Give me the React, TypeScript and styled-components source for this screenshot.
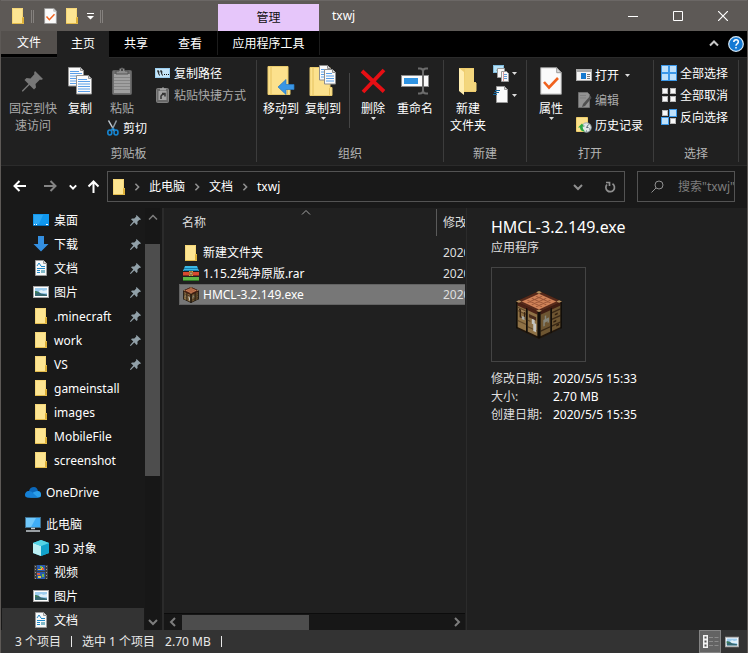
import React from "react";
import styled, { createGlobalStyle } from "styled-components";

const GlobalStyle = createGlobalStyle`
  *, *::before, *::after { box-sizing: border-box; }
  html, body, #root { height: 100%; }
  body {
    margin: 0;
    background: #202020;
    color: #fff;
    font: 12px/17px "Noto Sans", "Noto Sans CJK SC", sans-serif;
    overflow: hidden;
  }
  button, input { font: inherit; color: inherit; background: none; border: 0; margin: 0; padding: 0; }
  svg { display: block; flex: none; }
  h1, h2, dl, dd, ul, p { margin: 0; padding: 0; font-weight: 400; }
  ul { list-style: none; }
`;

/* ---------- icons ---------- */

const FolderIcon = ({ size = 16 }: { size?: number }) => (
  <svg width={size} height={size} viewBox="0 0 16 16">
    <path d="M2 0h11v9h1v7H2z" fill="#ffe38f" />
    <path d="M2.5.5h10v15h-10z" fill="#fde592" stroke="#f5d678" />
    <path d="M12.5 15.5v-6h1v6z" fill="#ffe9a0" stroke="#dcae35" />
    <path d="M2 15.5h12" stroke="#e3bb4c" />
  </svg>
);

const PinSmall = () => (
  <svg width="11" height="11" viewBox="0 0 11 11" fill="#91a0a8">
    <path d="M6.500 0L11 4.300l-1 .6-.6-.2-2 2 .2 2.300-1 .9L4.300 7.600 1 10.800 0 11l.2-1L3.300 6.600 1 4.300l1-.9 2.300.2 2-2-.2-.8z" />
  </svg>
);

const PinLarge = () => (
  <svg width="22" height="22" viewBox="0 0 22 22" fill="#777">
    <path d="M13 1L21 9l-2 1-1-.5-4.500 4.500.5 3.500-2 2L7.500 15 1 21.500H0V20.500L6.500 14 2.500 10l2-2 4 .5L12.500 4 12 3z" />
  </svg>
);

const CopyIcon = () => (
  <svg width="25" height="28" viewBox="0 0 25 28">
    {[[0, 0], [8, 8]].map(([x, y]) => (
      <g key={x} transform={`translate(${x} ${y})`}>
        <path d="M.5.5h12l3 3v15.500H.5z" fill="#fbfbfb" stroke="#959595" />
        <path d="M12.500.5v3h3z" fill="#ddd" stroke="#959595" />
        <path d="M2 4.500h9M2 6.500h12M2 9h12M2 11.500h12M2 14h12M2 16.500h12" stroke="#5b9fe8" strokeWidth="1" />
      </g>
    ))}
  </svg>
);

const PasteIcon = () => (
  <svg width="20" height="28" viewBox="0 0 20 28">
    <rect x=".5" y="3.500" width="19" height="24" rx="1" fill="#6e6e6e" stroke="#606060" />
    <rect x="2" y="7" width="16" height="19" fill="#a0a0a0" />
    <path d="M2 10.500h16M2 13.500h16M2 16.500h16M2 19.500h16M2 22.500h16" stroke="#858585" />
    <path d="M4 7V4h3q0-3 3-3t3 3h3v3z" fill="#8d8d8d" stroke="#555" />
    <circle cx="10" cy="3" r="1" fill="#333" />
  </svg>
);

const ScissorsIcon = () => (
  <svg width="14" height="16" viewBox="0 0 14 16" fill="none">
    <path d="M2.500 0.500L8.500 11" stroke="#c5ced6" strokeWidth="1.500" />
    <path d="M10.500 0.500L5.500 11" stroke="#8e9aa3" strokeWidth="1.500" />
    <ellipse cx="3.800" cy="12.500" rx="2" ry="2.500" stroke="#1685d1" strokeWidth="1.600" />
    <ellipse cx="10" cy="12.500" rx="2" ry="2.500" stroke="#1685d1" strokeWidth="1.600" />
    <path d="M5 10l2-1.500L9 10" stroke="#1685d1" strokeWidth="1.500" />
  </svg>
);

const PathIcon = () => (
  <svg width="16" height="16" viewBox="0 0 16 16">
    <rect x=".5" y="3.500" width="14" height="9" fill="#c5e5f8" stroke="#9ccff0" />
    <path d="M2.500 5.500l2 5M5.500 5.500l2 5M3.500 5.500l.5 2M6.500 5.500l.5 2" stroke="#111" />
    <path d="M9 9.500h1M11 9.500h1M13 9.500h1" stroke="#111" />
  </svg>
);

const ShortcutIcon = () => (
  <svg width="16" height="16" viewBox="0 0 16 16">
    <rect x="1.500" y="1.500" width="12" height="14" rx="1" fill="#696969" stroke="#808080" />
    <rect x="3.500" y="4" width="8" height="9" fill="#a3a3a3" />
    <path d="M5 3.500v-2h2v-1h2v1h2v2z" fill="#a0a0a0" />
    <path d="M6 12V9q0-1 3-2M7 6.500h3v3" stroke="#333" strokeWidth="1.500" fill="none" />
  </svg>
);

const MoveIcon = () => (
  <svg width="28" height="30" viewBox="0 0 28 30">
    <path d="M1 .5h20v20h2v8H1z" fill="#fce18d" stroke="#eacb6c" />
    <path d="M4 1v27M20.500 21v7" stroke="#e6c25f" />
    <path d="M11 21l8-7.500v5h8v5h-8v5z" fill="#3a96e5" stroke="#2678c1" strokeWidth=".7" />
  </svg>
);

const CopyToIcon = () => (
  <svg width="28" height="32" viewBox="0 0 28 32">
    <path d="M1 2.500h20v20h2v8H1z" fill="#fce18d" stroke="#eacb6c" />
    <path d="M4 3v27M20.500 23v7" stroke="#e6c25f" />
    {[[10, 0], [15, 4]].map(([x, y]) => (
      <g key={x} transform={`translate(${x} ${y})`}>
        <path d="M.5.500h8l3 3v11.500H.5z" fill="#fbfbfb" stroke="#8d8d8d" />
        <path d="M8.500.500v3h3" fill="#ddd" stroke="#8d8d8d" />
        <path d="M2 4.500h6M2 7h8M2 9.500h8M2 12h8" stroke="#5b9fe8" />
      </g>
    ))}
  </svg>
);

const DeleteIcon = () => (
  <svg width="26" height="26" viewBox="0 0 26 26">
    <path d="M2 3l22 20.500M24 2L3 24" stroke="#e60f14" strokeWidth="3.800" />
  </svg>
);

const RenameIcon = () => (
  <svg width="28" height="28" viewBox="0 0 28 28" fill="none">
    <rect x=".5" y="8.500" width="27" height="11" fill="#fafafa" stroke="#8b8b8b" />
    <rect x="3" y="11" width="14" height="6" fill="#2f93e2" />
    <path d="M17 1.500h2q3 0 3 3v19q0 3-3 3h-2M27 1.500h-2q-3 0-3 3M27 26.500h-2q-3 0-3-3" stroke="#6c6c6c" strokeWidth="2" />
  </svg>
);

const NewFolderIcon = () => (
  <svg width="20" height="28" viewBox="0 0 20 28">
    <path d="M1 1h15v14h2v10H5z" fill="#efcd6e" />
    <path d="M7 2h9v14h2.500v8H6z" fill="#f3d67d" />
    <path d="M1 1l5 4v23l-5-4z" fill="#ffedb0" />
  </svg>
);

const NewItemIcon = () => (
  <svg width="16" height="18" viewBox="0 0 16 18">
    <rect x=".5" y="1.500" width="10" height="7" fill="#b7e2f8" stroke="#80bbdc" />
    <path d="M3 6.500l2-2 2 2z" fill="#398c77" />
    <path d="M4.500 4.500h7v9h-7z" fill="#f8f8f8" stroke="#999" />
    <path d="M8.500 7.500h5l2 2v8h-7z" fill="#f8f8f8" stroke="#999" />
    <path d="M10 10.500h4M10 12.500h4M10 14.500h4" stroke="#619bd6" />
    <path d="M10.500 8v9" stroke="#db9f9f" />
  </svg>
);

const EasyAccessIcon = () => (
  <svg width="16" height="18" viewBox="0 0 16 18">
    <path d="M3.500.500h8l3 3v13h-11z" fill="#fbfbfb" stroke="#999" />
    <path d="M11.500.500v3h3z" fill="#ddd" stroke="#999" />
    <path d="M2 4.500h5M1 6.500h5M0 8.500h4" stroke="#16669d" strokeWidth="1.200" />
  </svg>
);

const PropertiesIcon = ({ small = false }: { small?: boolean }) => (
  <svg width={small ? 13 : 22} height={small ? 16 : 28} viewBox="0 0 22 28">
    <path d="M.7.700h16l4.600 5v21.500H.7z" fill="#fbfbfb" stroke="#9b9b9b" strokeWidth={small ? 1.5 : 1} />
    <path d="M16.700.700v5h4.600z" fill="#ddd" stroke="#9b9b9b" />
    <path d="M4 15l5 5.500L18 11" stroke="#f0621e" strokeWidth="2.600" fill="none" />
  </svg>
);

const OpenIcon = () => (
  <svg width="16" height="16" viewBox="0 0 16 16">
    <rect x=".5" y="2.500" width="15" height="11" fill="#f5f5f5" stroke="#aaa" />
    <path d="M1 4h14" stroke="#a7a7a7" strokeWidth="2" />
    <rect x="5" y="6" width="5" height="6" fill="#1479cf" />
    <path d="M11 7.500h3M11 9.500h3M11 11.500h3" stroke="#777" />
  </svg>
);

const EditIcon = () => (
  <svg width="16" height="16" viewBox="0 0 16 16">
    <path d="M2.500.500h9l2 2v13h-11z" fill="#929292" stroke="#6e6e6e" />
    <path d="M4 3.500h6M4 6h6" stroke="#818181" />
    <path d="M14.500 3.500L7 12l-1 3 3-1 6.500-8z" fill="#505050" />
  </svg>
);

const HistoryIcon = () => (
  <svg width="16" height="16" viewBox="0 0 16 16">
    <path d="M.5.500h11v14H.5z" fill="#fbe18b" stroke="#efcd6c" />
    <circle cx="10.500" cy="10.500" r="4.700" fill="#e1e7e8" stroke="#9aabb0" />
    <path d="M10.500 10.500l2-3M10.500 10.500h2M7.500 9h1M10 14h1M13 12h1" stroke="#586b73" />
    <path d="M2 10.500l4-4 2 3H6.500q0 3 2.500 5-5 0-5-4z" fill="#2ba843" />
  </svg>
);

const SELECT_ON: Record<string, number[]> = { all: [1, 1, 1, 1], none: [0, 0, 0, 0], invert: [0, 1, 1, 0] };

const SelectIcon = ({ kind }: { kind: "all" | "none" | "invert" }) => (
  <svg width="16" height="16" viewBox="0 0 16 16">
    {SELECT_ON[kind].map((on, i) => {
      const x = (i % 2) * 8;
      const y = i > 1 ? 8 : 0;
      return on ? (
        <g key={i}>
          <rect x={x} y={y} width="8" height="8" fill="#3c98e8" />
          <rect x={x + 1} y={y + 1} width="6" height="6" fill="#bfe1fb" />
        </g>
      ) : (
        <rect key={i} x={x + 1.5} y={y + 1.5} width="5" height="5" fill="#f8f8f8" stroke="#b9b9b9" />
      );
    })}
  </svg>
);

const DesktopIcon = () => (
  <svg width="16" height="16" viewBox="0 0 16 16">
    <path d="M0 2h16v12H0z" fill="#1097ee" />
    <path d="M1 3h9L6 12H1z" fill="#2ba7f5" />
    <path d="M1 12.500h1M3 12.500h1M13 12.500h2" stroke="#fff" />
    <path d="M0 13.500h16" stroke="#0872bf" />
  </svg>
);

const DownloadIcon = () => (
  <svg width="16" height="16" viewBox="0 0 16 16">
    <path d="M5 0h6v8h4.500L8 15.500.500 8H5z" fill="#348fe0" />
  </svg>
);

const DocumentIcon = () => (
  <svg width="16" height="16" viewBox="0 0 16 16">
    <path d="M2.500.500h8l3 3v12h-11z" fill="#f7f9fa" stroke="#9a9a9a" />
    <path d="M10.500.500v3h3" fill="#ddd" stroke="#9a9a9a" />
    <path d="M4 6l2-3 2 3M4 8.500h8M4 10.500h3M8 6.500h4M4 12.500h3" stroke="#2289c8" fill="none" />
    <rect x="8" y="10" width="4" height="3" fill="#82b9c8" />
  </svg>
);

const PictureIcon = ({ width = 16 }: { width?: number }) => (
  <svg width={width} height={width} viewBox="0 0 16 16">
    <rect x=".5" y="2.500" width="15" height="11" fill="#fff" stroke="#a5a5a5" />
    <rect x="2" y="4" width="12" height="8" fill="#9fceef" />
    <path d="M6 7q3-2 4 0l4-1v3H6z" fill="#dff0f9" />
    <path d="M2 7q4 0 6 2.500l6 1V12H2z" fill="#356872" />
    <path d="M2 7q2 0 4 2H2z" fill="#3e8056" />
  </svg>
);

const CloudIcon = () => (
  <svg width="16" height="16" viewBox="0 0 16 16">
    <path d="M1 10q0-3 3-3 1-4 5-4 3 0 4 4 3 0 3 4 0 2.500-3 2.500H3q-3 0-3-3z" fill="#0b67b9" />
    <path d="M6 13q-1-3 3-5l3-1q4 0 4 4 0 2.500-3 2.500H3z" fill="#2b9fea" />
    <path d="M0 10q1-3 4-3 3 0 5 3l4 3.500H3q-3 0-3-3.500z" fill="#1681d6" />
  </svg>
);

const ComputerIcon = () => (
  <svg width="16" height="16" viewBox="0 0 16 16">
    <rect x=".5" y="1.500" width="15" height="10" fill="#3fadf7" stroke="#3f7190" />
    <path d="M1 2h10L6 11H1z" fill="#71c8fb" />
    <path d="M6 12.500h4M1 15h14" stroke="#c3ccd1" strokeWidth="1.500" />
  </svg>
);

const CubeIcon = () => (
  <svg width="16" height="16" viewBox="0 0 16 16">
    <path d="M8 0l8 3v10l-8 3-8-3V3z" fill="#24bddb" />
    <path d="M0 3l8 3v10l-8-3z" fill="#bceff3" />
    <path d="M8 6l8-3v10l-8 3z" fill="#11a2cb" />
    <path d="M0 3l8-3 8 3-8 3z" fill="#55d4e5" />
  </svg>
);

const VideoIcon = () => (
  <svg width="16" height="16" viewBox="0 0 16 16">
    <path d="M1 1h14v14H1z" fill="#3d3d3d" />
    <path d="M2.500 2v13M13.500 2v13" stroke="#999" strokeDasharray="1 2" />
    <path d="M4 1h8v6H4zM4 8h8v7H4z" fill="#285baf" />
    <path d="M5 5h3V3h2v3H5zM5 12h3v2H5z" fill="#e4c23b" />
    <path d="M9 4h2v2H9zM4 9h3v2H4z" fill="#d95a46" />
    <path d="M7 2h2v2H7zM9 10h2v3H9z" fill="#6fb54c" />
  </svg>
);

const ArchiveIcon = () => (
  <svg width="16" height="16" viewBox="0 0 16 16">
    <path d="M2 0h12l2 5H0z" fill="#3bb8e5" />
    <path d="M1 2.500h14M1 4.500h14" stroke="#167fae" />
    <path d="M0 6h16v4H0z" fill="#d84a31" />
    <path d="M0 9.500h16" stroke="#8b2b20" />
    <path d="M0 11h16v4H0z" fill="#5eb544" />
    <path d="M0 14.500h16" stroke="#2e7625" />
    <path d="M6 5h4v5H6z" fill="#d9a445" />
    <path d="M7 6h2v3H7z" fill="#f8ecc9" stroke="#714b20" />
  </svg>
);

/* Isometric block: each face is drawn on its own 16×16 grid. */
const CraftingTable = ({ size }: { size: number }) => (
  <svg width={size} height={size} viewBox="0 0 48 48">
    <path d="M24 0L47 10.500V37L24 48 1 37V10.500z" fill="#21160c" />
    <g transform="matrix(1.4375 .65625 0 1.65625 1 10.500)">
      <path d="M1 1h6v14H1zM8 1h7v14H8z" fill="#8f7246" />
      <path d="M1 3h6v2H1zM1 11h6M8 12h7M8 8h2" fill="#a5855a" stroke="#604829" strokeWidth=".7" />
      <path d="M1 0h14v2H1z" fill="#4b2216" />
      <path d="M2 4h1v4h3V4" fill="none" stroke="#3c2614" />
      <path d="M4 7h2v2H4z" fill="#aaaaa4" />
      <path d="M9 4h5v2H9z" fill="#4a2c1c" />
      <path d="M11 6h2v2h1v5h-2V9h-1z" fill="#c6c6c2" />
      <path d="M.5 0v16M7.500 1v15M15.500 0v16" stroke="#110e0a" />
    </g>
    <g transform="matrix(1.4375 -.65625 0 1.65625 24 21)">
      <path d="M1 1h7v14H1zM9 1h6v14H9z" fill="#6d5531" />
      <path d="M1 12h7M9 4h6M9 8h6M9 12h6" stroke="#3a2916" strokeWidth=".9" />
      <path d="M1 0h14v2H1z" fill="#3f1d12" />
      <path d="M4 4h1v2h2v3H6V8H4v2H3V6h1z" fill="#85857a" />
      <path d="M11 6h2M10 10h2M12 13h2" stroke="#2f1e0f" />
      <path d="M.5 0v16M8.500 1v15M15.500 0v16" stroke="#110e0a" />
    </g>
    <g transform="matrix(1.4375 -.65625 1.4375 .65625 1 10.500)">
      <path d="M0 0h16v16H0z" fill="#572a1b" />
      <path d="M2 2h12v12H2z" fill="#cf8258" />
      <path d="M5 3v10M8 3v10M11 3v10M3 5h10M3 8h10M3 11h10" stroke="#9a5638" strokeWidth=".8" />
      <path d="M0 0h2v2H0zM14 0h2v2h-2zM0 14h2v2H0zM14 14h2v2h-2z" fill="#b0905f" />
    </g>
  </svg>
);

const ARROWS = {
  left: "M13 6H1.500M6.500 1L1.500 6l5 5",
  right: "M0 6h11.500M6.500 1l5 5-5 5",
  up: "M6.500 13V1.500M1.500 6.500l5-5 5 5",
};

const ArrowIcon = ({ dir }: { dir: keyof typeof ARROWS }) => (
  <svg width="13" height="13" viewBox="0 0 13 13" fill="none" stroke="currentColor" strokeWidth="2">
    <path d={ARROWS[dir]} />
  </svg>
);

const CHEVRONS = {
  up: "M1 6.500L5 2.500l4 4",
  down: "M1 3l4 4 4-4",
  left: "M7 1L3 5l4 4",
  right: "M3 1l4 4-4 4",
};

const Chevron = ({ dir, size = 10, weight = 1.5 }: { dir: keyof typeof CHEVRONS; size?: number; weight?: number }) => (
  <svg width={size} height={size} viewBox="0 0 10 10" fill="none" stroke="currentColor" strokeWidth={weight}>
    <path d={CHEVRONS[dir]} />
  </svg>
);

const Drop = () => (
  <svg width="5" height="3" viewBox="0 0 5 3" fill="#dcdcdc">
    <path d="M0 0h5L2.500 3z" />
  </svg>
);

/* ---------- frame ---------- */

const Window = styled.div`
  display: flex;
  flex-direction: column;
  height: 100vh;
  border: solid #5d5956;
  border-width: 0 1px;
  background: #191919;
`;

const TitleBar = styled.header`
  display: flex;
  flex: none;
  height: 31px;
  padding-right: 2px;
  background: #5d5956;
  border-top: 1px solid #6b6765;
`;

const QuickAccess = styled.div`
  display: flex;
  align-items: center;
  width: 217px;
  padding-left: 6px;
`;

const QuickButton = styled.button<{ $narrow?: boolean }>`
  display: flex;
  align-items: center;
  justify-content: center;
  width: ${(p) => (p.$narrow ? 15 : 22)}px;
  height: 20px;
`;

const QuickDivider = styled.span`
  width: 3px;
  height: 13px;
  margin: 0 5px 0 2px;
  border: solid #85817e;
  border-width: 0 1px;
`;

const ContextTitle = styled.div`
  align-self: flex-end;
  width: 101px;
  height: 27px;
  background: #e6c6fa;
  color: #111;
  line-height: 27px;
  text-align: center;
`;

const WindowTitle = styled.h1`
  flex: 1;
  padding-left: 13px;
  font-size: 12px;
  line-height: 30px;
`;

const WindowButton = styled.button`
  display: flex;
  align-items: center;
  justify-content: center;
  width: 45px;
`;

const TabBar = styled.nav`
  display: flex;
  flex: none;
  align-items: flex-start;
  height: 27px;
  padding-right: 3px;
  background: #000;
  border-bottom: 1px solid #2b2b2b;
`;

const Tab = styled.button<{ $kind?: "file" | "active" | "context" }>`
  flex: none;
  width: ${(p) => (p.$kind === "file" ? 56 : p.$kind === "active" ? 52 : p.$kind === "context" ? 103 : 54)}px;
  height: ${(p) => (p.$kind === "file" ? 23 : p.$kind === "active" ? 27 : 24)}px;
  padding-bottom: ${(p) => (p.$kind === "active" ? 3 : 0)}px;
  background: ${(p) => (p.$kind === "file" ? "#54504d" : p.$kind === "active" ? "#202020" : "transparent")};
  border: solid ${(p) => (p.$kind === "context" ? "#1c1c1c" : "transparent")};
  border-width: 0 1px;
`;

const TabTools = styled.div`
  display: flex;
  flex: 1;
  align-items: center;
  justify-content: flex-end;
  gap: 9px;
  height: 26px;
  color: #c8c8c8;
`;

const ToolButton = styled.button`
  display: flex;
`;

/* ---------- ribbon ---------- */

const Ribbon = styled.section`
  display: flex;
  flex: none;
  height: 108px;
  padding: 2px 0 3px;
  background: #202020;
  border-bottom: 1px solid #2b2b2b;
`;

const Group = styled.div<{ $width: number }>`
  display: flex;
  flex: none;
  flex-direction: column;
  width: ${(p) => p.$width}px;
  border-right: 1px solid #3c3c3c;
`;

const GroupBody = styled.div<{ $pad?: number }>`
  display: flex;
  flex: 1;
  align-items: flex-start;
  padding: 2px 0 0 ${(p) => p.$pad ?? 0}px;
`;

const GroupName = styled.div`
  height: 17px;
  color: #b4b4b4;
  text-align: center;
`;

const BigButton = styled.button<{ $width: number; $muted?: boolean }>`
  display: flex;
  flex: none;
  flex-direction: column;
  align-items: center;
  width: ${(p) => p.$width}px;
  padding-top: 2px;
  color: ${(p) => (p.$muted ? "#aaa" : "#fff")};
  white-space: nowrap;
`;

const BigIcon = styled.span`
  display: flex;
  align-items: center;
  justify-content: center;
  height: 36px;
  padding-bottom: 2px;
`;

const Stack = styled.div<{ $gap?: number; $left?: number; $top?: number }>`
  display: flex;
  flex: none;
  flex-direction: column;
  align-items: flex-start;
  gap: ${(p) => p.$gap ?? 0}px;
  margin-left: ${(p) => p.$left ?? 0}px;
  padding-top: ${(p) => p.$top ?? 0}px;
`;

const SmallButton = styled.button<{ $muted?: boolean; $indent?: number }>`
  display: flex;
  align-items: center;
  gap: 3px;
  height: 22px;
  padding-left: ${(p) => p.$indent ?? 0}px;
  color: ${(p) => (p.$muted ? "#aaa" : "#fff")};
  white-space: nowrap;
`;

const InnerDivider = styled.span`
  width: 1px;
  height: 55px;
  margin: 11px 2px 0 5px;
  background: #454545;
`;

/* ---------- address row ---------- */

const AddressRow = styled.div`
  display: flex;
  flex: none;
  align-items: center;
  height: 42px;
  padding: 0 12px 1px 0;
`;

const NavButtons = styled.div`
  display: flex;
  align-items: center;
  width: 106px;
  padding-left: 12px;
`;

const NavButton = styled.button<{ $width: number; $muted?: boolean }>`
  display: flex;
  width: ${(p) => p.$width}px;
  color: ${(p) => (p.$muted ? "#858585" : "#fff")};
`;

const AddressBox = styled.div`
  display: flex;
  flex: 1;
  align-items: center;
  height: 31px;
  padding-left: 3px;
  border: 1px solid #535353;
  color: #8f8f8f;
`;

const Crumb = styled.a`
  margin: 0 8px;
  color: #fff;
  text-decoration: none;
`;

const AddressTail = styled.div`
  display: flex;
  align-items: center;
  gap: 21px;
  margin-left: auto;
  padding-right: 8px;
`;

const SearchBox = styled.label`
  display: flex;
  align-items: center;
  gap: 14px;
  width: 98px;
  height: 31px;
  margin-left: 12px;
  padding-left: 13px;
  border: 1px solid #535353;
  color: #8f8f8f;
`;

const SearchInput = styled.input`
  flex: 1;
  min-width: 0;
  outline: 0;
  &::placeholder { color: #7d7d7d; opacity: 1; }
`;

/* ---------- panes ---------- */

const Panes = styled.main`
  display: flex;
  flex: 1;
  min-height: 0;
`;

const Tree = styled.ul`
  flex: none;
  width: 144px;
  padding: 0 1px;
  overflow: hidden;
`;

const TreeRow = styled.li<{ $depth: number; $selected?: boolean; $gap?: boolean }>`
  display: flex;
  align-items: center;
  gap: 5px;
  height: 24px;
  margin-top: ${(p) => (p.$gap ? 8 : 0)}px;
  padding: 0 3px 0 ${(p) => (p.$depth ? 31 : 23)}px;
  background: ${(p) => (p.$selected ? "#333" : "transparent")};
`;

const TreeName = styled.span`
  flex: 1;
  white-space: nowrap;
`;

const VerticalBar = styled.div`
  display: flex;
  flex: none;
  flex-direction: column;
  align-items: center;
  width: 15px;
  padding: 5px 0 3px;
  background: #171717;
  color: #7d7d7d;
`;

const VerticalThumb = styled.div`
  width: 100%;
  height: 232px;
  margin: 21px 0 auto;
  background: #4d4d4d;
`;

const FilesPane = styled.section`
  display: flex;
  flex: 1 1 305px;
  flex-direction: column;
  min-width: 0;
  margin-left: 2px;
  padding-right: 1px;
  background: #202020;
  border: solid #2b2b2b;
  border-width: 0 1px 0 2px;
`;

const FilesScroll = styled.div`
  position: relative;
  flex: 1;
  min-height: 0;
  padding: 1px 0 0 15px;
  overflow: hidden;
`;

const SortMark = styled.span`
  position: absolute;
  top: 0;
  left: 137px;
  color: #a5a5a5;
`;

const FileTable = styled.table`
  width: 100%;
  min-width: 377px;
  table-layout: fixed;
  border-collapse: separate;
  border-spacing: 0;
  text-align: left;
`;

const HeadCell = styled.th<{ $date?: boolean }>`
  width: ${(p) => (p.$date ? "auto" : "257px")};
  height: 27px;
  padding: 0 0 0 ${(p) => (p.$date ? 6 : 3)}px;
  border-left: ${(p) => (p.$date ? "1px solid #5a5a5a" : "0")};
  color: #dedede;
  font-weight: 400;
  white-space: nowrap;
`;

const GapCell = styled.td`
  height: 6px;
  padding: 0;
`;

const FileRow = styled.tr<{ $selected?: boolean }>`
  background: ${(p) => (p.$selected ? "#777" : "transparent")};
  box-shadow: ${(p) => (p.$selected ? "inset 0 0 0 1px #636363" : "none")};
`;

const FileCell = styled.td<{ $date?: boolean }>`
  height: 21px;
  padding: 0 0 0 ${(p) => (p.$date ? 7 : 4)}px;
  color: ${(p) => (p.$date ? "#dedede" : "#fff")};
  white-space: nowrap;
`;

const FileName = styled.div`
  display: flex;
  align-items: center;
  gap: 4px;
`;

const HorizontalBar = styled.div`
  display: flex;
  flex: none;
  align-items: center;
  height: 17px;
  padding: 0 3px 0 4px;
  background: #171717;
  border-top: 1px solid #0c0c0c;
  color: #7d7d7d;
`;

const HorizontalThumb = styled.div`
  width: 127px;
  height: 15px;
  margin: 0 auto 0 4px;
  background: #4d4d4d;
`;

const DetailsPane = styled.aside`
  flex: 1 1 280px;
  min-width: 0;
  padding: 7px 0 0 24px;
  background: #202020;
  white-space: nowrap;
`;

const DetailsTitle = styled.h2`
  font-size: 16px;
  line-height: 24px;
`;

const DetailsKind = styled.p`
  line-height: 18px;
  color: #dedede;
`;

const Preview = styled.div`
  display: flex;
  align-items: center;
  justify-content: center;
  width: 95px;
  height: 95px;
  margin: 10px 0 8px;
  border: 1px solid #444;
`;

const Facts = styled.dl`
  display: grid;
  grid-template-columns: 62px auto;
  line-height: 18px;
`;

const FactName = styled.dt`
  color: #dedede;
`;

const StatusBar = styled.footer`
  display: flex;
  flex: none;
  align-items: center;
  height: 23px;
  padding: 0 4px 0 14px;
  background: #333;
  color: #e8e8e8;
`;

const StatusDivider = styled.span`
  width: 1px;
  height: 11px;
  margin: 0 10px;
  background: #e8e8e8;
`;

const StatusSize = styled.span`
  margin-left: 10px;
`;

const ViewButtons = styled.div`
  display: flex;
  margin-left: auto;
`;

const ViewButton = styled.button<{ $on?: boolean }>`
  display: flex;
  align-items: center;
  justify-content: center;
  width: 22px;
  height: 23px;
  background: ${(p) => (p.$on ? "#636363" : "transparent")};
  border: 1px solid ${(p) => (p.$on ? "#858585" : "transparent")};
`;

/* ---------- data ---------- */

type TreeItem = { name: string; icon: React.ReactNode; depth: number; pinned?: boolean; gap?: boolean; selected?: boolean };

const tree: TreeItem[] = [
  { name: "桌面", icon: <DesktopIcon />, depth: 1, pinned: true },
  { name: "下载", icon: <DownloadIcon />, depth: 1, pinned: true },
  { name: "文档", icon: <DocumentIcon />, depth: 1, pinned: true },
  { name: "图片", icon: <PictureIcon />, depth: 1, pinned: true },
  { name: ".minecraft", icon: <FolderIcon />, depth: 1, pinned: true },
  { name: "work", icon: <FolderIcon />, depth: 1, pinned: true },
  { name: "VS", icon: <FolderIcon />, depth: 1, pinned: true },
  { name: "gameinstall", icon: <FolderIcon />, depth: 1 },
  { name: "images", icon: <FolderIcon />, depth: 1 },
  { name: "MobileFile", icon: <FolderIcon />, depth: 1 },
  { name: "screenshot", icon: <FolderIcon />, depth: 1 },
  { name: "OneDrive", icon: <CloudIcon />, depth: 0, gap: true },
  { name: "此电脑", icon: <ComputerIcon />, depth: 0, gap: true },
  { name: "3D 对象", icon: <CubeIcon />, depth: 1 },
  { name: "视频", icon: <VideoIcon />, depth: 1 },
  { name: "图片", icon: <PictureIcon />, depth: 1 },
  { name: "文档", icon: <DocumentIcon />, depth: 1, selected: true },
];

const files = [
  { name: "新建文件夹", icon: <FolderIcon /> },
  { name: "1.15.2纯净原版.rar", icon: <ArchiveIcon /> },
  { name: "HMCL-3.2.149.exe", icon: <CraftingTable size={16} />, selected: true },
];

const facts = [
  ["修改日期:", "2020/5/5 15:33"],
  ["大小:", "2.70 MB"],
  ["创建日期:", "2020/5/5 15:35"],
];

type BigProps = { icon: React.ReactNode; width: number; lines: string[]; muted?: boolean; drop?: boolean };

const Big = ({ icon, width, lines, muted, drop }: BigProps) => (
  <BigButton $width={width} $muted={muted}>
    <BigIcon>{icon}</BigIcon>
    {lines.map((line) => (
      <span key={line}>{line}</span>
    ))}
    {drop && <Drop />}
  </BigButton>
);

export default function App() {
  return (
    <Window>
      <GlobalStyle />
      <TitleBar>
        <QuickAccess>
          <QuickButton aria-label="txwj"><FolderIcon /></QuickButton>
          <QuickDivider />
          <QuickButton aria-label="属性"><PropertiesIcon small /></QuickButton>
          <QuickButton aria-label="新建文件夹"><FolderIcon /></QuickButton>
          <QuickButton $narrow aria-label="自定义">
            <svg width="7" height="7" viewBox="0 0 7 7" fill="#fff"><path d="M0 0h7v1H0zM0 3h7L3.500 6.500z" /></svg>
          </QuickButton>
          <QuickDivider />
        </QuickAccess>
        <ContextTitle>管理</ContextTitle>
        <WindowTitle>txwj</WindowTitle>
        <WindowButton aria-label="最小化">
          <svg width="10" height="10" viewBox="0 0 10 10" stroke="#fff"><path d="M0 5.500h10" /></svg>
        </WindowButton>
        <WindowButton aria-label="最大化">
          <svg width="10" height="10" viewBox="0 0 10 10" fill="none" stroke="#fff"><path d="M.5.500h9v9h-9z" /></svg>
        </WindowButton>
        <WindowButton aria-label="关闭">
          <svg width="10" height="10" viewBox="0 0 10 10" stroke="#fff" strokeWidth="1.200"><path d="M0 0l10 10M10 0L0 10" /></svg>
        </WindowButton>
      </TitleBar>

      <TabBar>
        <Tab $kind="file">文件</Tab>
        <Tab $kind="active">主页</Tab>
        <Tab>共享</Tab>
        <Tab>查看</Tab>
        <Tab $kind="context">应用程序工具</Tab>
        <TabTools>
          <ToolButton aria-label="折叠功能区"><Chevron dir="up" weight={2} /></ToolButton>
          <ToolButton aria-label="帮助">
            <svg width="16" height="16" viewBox="0 0 16 16">
              <circle cx="8" cy="8" r="7.300" fill="#1379d4" stroke="#d5e7f5" strokeWidth="1.200" />
              <path d="M5.800 6q0-2.300 2.300-2.300T10.300 6q0 1-1.200 1.800T8 9.700M8 11v1.600" fill="none" stroke="#fff" strokeWidth="1.500" />
            </svg>
          </ToolButton>
        </TabTools>
      </TabBar>

      <Ribbon>
        <Group $width={256}>
          <GroupBody>
            <Big icon={<PinLarge />} width={64} lines={["固定到快", "速访问"]} muted />
            <Big icon={<CopyIcon />} width={30} lines={["复制"]} />
            <Stack $left={1}>
              <Big icon={<PasteIcon />} width={52} lines={["粘贴"]} muted />
              <SmallButton $indent={10}><ScissorsIcon />剪切</SmallButton>
            </Stack>
            <Stack $left={7}>
              <SmallButton><PathIcon />复制路径</SmallButton>
              <SmallButton $muted><ShortcutIcon />粘贴快捷方式</SmallButton>
            </Stack>
          </GroupBody>
          <GroupName>剪贴板</GroupName>
        </Group>
        <Group $width={187}>
          <GroupBody $pad={3}>
            <Big icon={<MoveIcon />} width={42} lines={["移动到"]} drop />
            <Big icon={<CopyToIcon />} width={42} lines={["复制到"]} drop />
            <InnerDivider />
            <Big icon={<DeleteIcon />} width={42} lines={["删除"]} drop />
            <Big icon={<RenameIcon />} width={42} lines={["重命名"]} />
          </GroupBody>
          <GroupName>组织</GroupName>
        </Group>
        <Group $width={83}>
          <GroupBody $pad={3}>
            <Big icon={<NewFolderIcon />} width={42} lines={["新建", "文件夹"]} />
            <Stack $left={4}>
              <SmallButton aria-label="新建项目"><NewItemIcon /><Drop /></SmallButton>
              <SmallButton aria-label="轻松访问"><EasyAccessIcon /><Drop /></SmallButton>
            </Stack>
          </GroupBody>
          <GroupName>新建</GroupName>
        </Group>
        <Group $width={127}>
          <GroupBody $pad={3}>
            <Big icon={<PropertiesIcon />} width={42} lines={["属性"]} drop />
            <Stack $left={4} $gap={3} $top={2}>
              <SmallButton><OpenIcon />打开&nbsp;<Drop /></SmallButton>
              <SmallButton $muted><EditIcon />编辑</SmallButton>
              <SmallButton><HistoryIcon />历史记录</SmallButton>
            </Stack>
          </GroupBody>
          <GroupName>打开</GroupName>
        </Group>
        <Group $width={85}>
          <GroupBody $pad={7}>
            <Stack>
              <SmallButton><SelectIcon kind="all" />全部选择</SmallButton>
              <SmallButton><SelectIcon kind="none" />全部取消</SmallButton>
              <SmallButton><SelectIcon kind="invert" />反向选择</SmallButton>
            </Stack>
          </GroupBody>
          <GroupName>选择</GroupName>
        </Group>
      </Ribbon>

      <AddressRow>
        <NavButtons>
          <NavButton $width={31} aria-label="后退"><ArrowIcon dir="left" /></NavButton>
          <NavButton $width={25} $muted aria-label="前进"><ArrowIcon dir="right" /></NavButton>
          <NavButton $width={18} aria-label="最近浏览的位置"><Chevron dir="down" size={8} weight={2.5} /></NavButton>
          <NavButton $width={13} aria-label="上移"><ArrowIcon dir="up" /></NavButton>
        </NavButtons>
        <AddressBox>
          <FolderIcon />
          <Stack $left={6}><Chevron dir="right" size={8} weight={2} /></Stack>
          <Crumb href="#pc">此电脑</Crumb>
          <Chevron dir="right" size={8} weight={2} />
          <Crumb href="#documents">文档</Crumb>
          <Chevron dir="right" size={8} weight={2} />
          <Crumb href="#txwj">txwj</Crumb>
          <AddressTail>
            <ToolButton aria-label="历史位置"><Chevron dir="down" weight={2} /></ToolButton>
            <ToolButton aria-label="刷新">
              <svg width="12" height="12" viewBox="0 0 12 12" fill="none" stroke="currentColor" strokeWidth="1.700">
                <path d="M8.500 2.800A4.300 4.300 0 1 1 3 3.500M2 1.500h3.500V5" />
              </svg>
            </ToolButton>
          </AddressTail>
        </AddressBox>
        <SearchBox>
          <svg width="13" height="13" viewBox="0 0 13 13" fill="none" stroke="currentColor">
            <circle cx="8" cy="5" r="4" />
            <path d="M5 8L.500 12.500" />
          </svg>
          <SearchInput type="text" aria-label="搜索" placeholder={'搜索"txwj"'} />
        </SearchBox>
      </AddressRow>

      <Panes>
        <Tree>
          {tree.map((item, i) => (
            <TreeRow key={i} $depth={item.depth} $selected={item.selected} $gap={item.gap}>
              {item.icon}
              <TreeName>{item.name}</TreeName>
              {item.pinned && <PinSmall />}
            </TreeRow>
          ))}
        </Tree>
        <VerticalBar>
          <Chevron dir="up" weight={1.5} />
          <VerticalThumb />
          <Chevron dir="down" weight={2} />
        </VerticalBar>
        <FilesPane>
          <FilesScroll>
            <SortMark><Chevron dir="up" weight={1} /></SortMark>
            <FileTable>
              <thead>
                <tr>
                  <HeadCell>名称</HeadCell>
                  <HeadCell $date>修改日期</HeadCell>
                </tr>
              </thead>
              <tbody>
                <tr><GapCell colSpan={2} /></tr>
                {files.map((file) => (
                  <FileRow key={file.name} $selected={file.selected}>
                    <FileCell><FileName>{file.icon}{file.name}</FileName></FileCell>
                    <FileCell $date>2020/5/5 15:33</FileCell>
                  </FileRow>
                ))}
              </tbody>
            </FileTable>
          </FilesScroll>
          <HorizontalBar>
            <Chevron dir="left" weight={2} />
            <HorizontalThumb />
            <Chevron dir="right" weight={2} />
          </HorizontalBar>
        </FilesPane>
        <DetailsPane>
          <DetailsTitle>HMCL-3.2.149.exe</DetailsTitle>
          <DetailsKind>应用程序</DetailsKind>
          <Preview><CraftingTable size={48} /></Preview>
          <Facts>
            {facts.map(([name, value]) => (
              <React.Fragment key={name}>
                <FactName>{name}</FactName>
                <dd>{value}</dd>
              </React.Fragment>
            ))}
          </Facts>
        </DetailsPane>
      </Panes>

      <StatusBar>
        <span>3 个项目</span>
        <StatusDivider />
        <span>选中 1 个项目</span>
        <StatusSize>2.70 MB</StatusSize>
        <StatusDivider />
        <ViewButtons>
          <ViewButton $on aria-label="详细信息">
            <svg width="17" height="13" viewBox="0 0 17 13">
              <path d="M1 0h5v13H1z" fill="#f3f3f3" />
              <path d="M2.500 1.500h2v2h-2zM2.500 5.500h2v2h-2zM2.500 9.500h2v2h-2z" fill="#555" />
              <path d="M7 2.500h4M12.500 2.500h4M7 6.500h4M12.500 6.500h4M7 10.500h4M12.500 10.500h4" stroke="#8b8b8b" />
            </svg>
          </ViewButton>
          <ViewButton aria-label="大图标"><PictureIcon width={14} /></ViewButton>
        </ViewButtons>
      </StatusBar>
    </Window>
  );
}
